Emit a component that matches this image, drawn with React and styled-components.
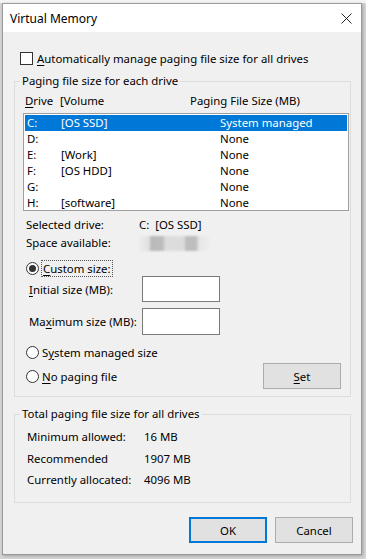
import React from 'react';
import styled, { createGlobalStyle } from 'styled-components';

const GlobalStyle = createGlobalStyle`
  html, body {
    margin: 0;
    padding: 0;
    background: #d5d5d5;
  }
  body {
    font-family: 'Noto Sans', 'Open Sans', sans-serif;
    font-size: 11.4px;
    color: #000;
  }
`;

const Screen = styled.div`
  width: 366px;
  height: 559px;
  overflow: hidden;
  background: #d5d5d5;
`;

const BackTabs = styled.div`
  height: 3px;
  overflow: hidden;
  background: #f4f4f4;
  display: flex;
  gap: 12px;
  padding-left: 7px;
  line-height: 16px;
  color: #333;

  span {
    margin-top: -13px;
    white-space: nowrap;
  }
`;

const Dialog = styled.div`
  margin-left: 2px;
  width: 358px;
  border: 1px solid #9a9a9a;
  background: #f0f0f0;
  box-shadow: 1px 1px 3px rgba(0, 0, 0, 0.25);
`;

const TitleBar = styled.div`
  height: 28px;
  background: #fff;
  display: flex;
  align-items: center;
  justify-content: space-between;
  padding: 0 9px 0 7px;
  font-size: 12px;
  color: #000;
`;

const Body = styled.div`
  padding: 18px 10px 11px 11px;
  display: flex;
  flex-direction: column;
`;

const CheckRow = styled.label`
  display: flex;
  align-items: center;
  height: 16px;
  padding-left: 6px;
  gap: 4px;
  white-space: nowrap;
`;

const CheckBox = styled.span`
  width: 11px;
  height: 11px;
  border: 1px solid #333;
  background: #fff;
  flex: none;
`;

const U = styled.span`
  text-decoration: underline;
  text-underline-offset: 2px;
`;

const GroupBox = styled.div`
  border: 1px solid #dcdcdc;
  margin-top: ${(p) => p.$top}px;
  padding: 0 1px ${(p) => p.$bottom}px 0;
  display: flex;
  flex-direction: column;
`;

const Legend = styled.div`
  margin: -9px 0 0 5px;
  padding: 0 2px;
  width: fit-content;
  line-height: 16px;
  background: #f0f0f0;
  white-space: nowrap;
`;

const HeaderRow = styled.div`
  display: grid;
  grid-template-columns: 35px 130px 1fr;
  margin-top: 4px;
  padding-left: 10px;
  height: 16px;
  line-height: 16px;
`;

const ListBox = styled.div`
  margin: 4px 0 0 8px;
  height: 96px;
  border: 1px solid #a0a0a0;
  background: #fff;
  padding: 0 1px;
`;

const ListRow = styled.div`
  display: grid;
  grid-template-columns: 34px 159px 1fr;
  height: 16px;
  line-height: 16px;
  padding-left: 2px;
  margin-top: ${(p) => (p.$first ? 1 : 0)}px;
  background: ${(p) => (p.$selected ? '#0078d7' : 'transparent')};
  color: ${(p) => (p.$selected ? '#fff' : '#000')};
  white-space: nowrap;
`;

const InfoRow = styled.div`
  display: grid;
  grid-template-columns: ${(p) => p.$label}px 1fr;
  align-items: center;
  height: 16px;
  line-height: 16px;
  margin-top: ${(p) => p.$top}px;
  padding-left: ${(p) => p.$left}px;
  white-space: nowrap;
`;

const Blurred = styled.div`
  width: 72px;
  height: 15px;
  background: linear-gradient(
    to right,
    #ececec 0,
    #e2e2e2 10px,
    #b9b9b9 12px,
    #bdbdbd 24px,
    #dcdcdc 26px,
    #dcdcdc 45px,
    #bdbdbd 47px,
    #bdbdbd 57px,
    #e6e6e6 60px,
    #efefef 72px
  );
  filter: blur(1px);
`;

const RadioRow = styled.label`
  display: flex;
  align-items: center;
  gap: 3px;
  height: ${(p) => p.$h || 16}px;
  margin-top: ${(p) => p.$top}px;
  padding-left: 11px;
  white-space: nowrap;
`;

const Radio = styled.span`
  width: 11px;
  height: 11px;
  border: 1px solid #333;
  border-radius: 50%;
  background: #fff;
  flex: none;
  display: flex;
  align-items: center;
  justify-content: center;

  &::after {
    content: '';
    width: 7px;
    height: 7px;
    border-radius: 50%;
    background: ${(p) => (p.$checked ? '#333' : 'transparent')};
  }
`;

const Focus = styled.span`
  outline: 1px dotted #555;
  outline-offset: 0;
  padding: 0 1px;
`;

const FieldRow = styled.div`
  display: grid;
  grid-template-columns: 113px 78px;
  align-items: center;
  margin-top: ${(p) => p.$top}px;
  padding-left: ${(p) => p.$left}px;
  white-space: nowrap;
`;

const TextBox = styled.input`
  box-sizing: border-box;
  width: 78px;
  height: ${(p) => p.$h}px;
  border: 1px solid #7a7a7a;
  background: #fff;
  margin: 0;
  padding: 0 3px;
  font: inherit;
`;

const SplitRow = styled.div`
  display: flex;
  align-items: center;
  justify-content: space-between;
  margin-top: 3px;
  padding-right: 8px;
`;

const Button = styled.button`
  box-sizing: border-box;
  width: 78px;
  height: ${(p) => p.$h || 26}px;
  background: #e1e1e1;
  border: ${(p) => (p.$default ? '2px solid #0078d7' : '1px solid #adadad')};
  font: inherit;
  color: #000;
  padding: 0;
`;

const Footer = styled.div`
  display: flex;
  justify-content: flex-end;
  gap: 8px;
  margin: 14px -2px 0 0;
`;

const Close = () => (
  <svg width="11" height="11" viewBox="0 0 11 11">
    <path d="M0.5 0.5 L10.5 10.5 M10.5 0.5 L0.5 10.5" stroke="#222" strokeWidth="1" />
  </svg>
);

const drives = [
  ['C:', '[OS SSD]', 'System managed'],
  ['D:', '', 'None'],
  ['E:', '[Work]', 'None'],
  ['F:', '[OS HDD]', 'None'],
  ['G:', '', 'None'],
  ['H:', '[software]', 'None'],
];

const App = () => (
  <Screen>
    <GlobalStyle />
    <BackTabs>
      <span>Visual Effects</span>
      <span>Advanced</span>
      <span>Data Execution Prevention</span>
    </BackTabs>
    <Dialog>
      <TitleBar>
        <span>Virtual Memory</span>
        <Close />
      </TitleBar>
      <Body>
        <CheckRow>
          <CheckBox />
          <span>
            <U>A</U>utomatically manage paging file size for all drives
          </span>
        </CheckRow>

        <GroupBox $top={15} $bottom={7}>
          <Legend>Paging file size for each drive</Legend>
          <HeaderRow>
            <span>
              <U>D</U>rive
            </span>
            <span>[Volume</span>
            <span>Paging File Size (MB)</span>
          </HeaderRow>
          <ListBox>
            {drives.map(([d, v, s], i) => (
              <ListRow key={d} $first={i === 0} $selected={i === 0}>
                <span>{d}</span>
                <span>{v}</span>
                <span>{s}</span>
              </ListRow>
            ))}
          </ListBox>
          <InfoRow $top={6} $left={11} $label={113}>
            <span>Selected drive:</span>
            <span>C:&nbsp; [OS SSD]</span>
          </InfoRow>
          <InfoRow $top={2} $left={11} $label={113}>
            <span>Space available:</span>
            <Blurred />
          </InfoRow>
          <RadioRow $top={10} $h={14}>
            <Radio $checked />
            <Focus>
              <U>C</U>ustom size:
            </Focus>
          </RadioRow>
          <FieldRow $top={1} $left={14}>
            <span>
              <U>I</U>nitial size (MB):
            </span>
            <TextBox $h={26} />
          </FieldRow>
          <FieldRow $top={6} $left={14}>
            <span>
              Ma<U>x</U>imum size (MB):
            </span>
            <TextBox $h={27} />
          </FieldRow>
          <RadioRow $top={9}>
            <Radio />
            <span>
              S<U>y</U>stem managed size
            </span>
          </RadioRow>
          <SplitRow>
            <RadioRow $top={0}>
              <Radio />
              <span>
                <U>N</U>o paging file
              </span>
            </RadioRow>
            <Button>
              <U>S</U>et
            </Button>
          </SplitRow>
        </GroupBox>

        <GroupBox $top={17} $bottom={14}>
          <Legend>Total paging file size for all drives</Legend>
          <InfoRow $top={7} $left={12} $label={117}>
            <span>Minimum allowed:</span>
            <span>16 MB</span>
          </InfoRow>
          <InfoRow $top={6} $left={12} $label={117}>
            <span>Recommended</span>
            <span>1907 MB</span>
          </InfoRow>
          <InfoRow $top={5} $left={12} $label={117}>
            <span>Currently allocated:</span>
            <span>4096 MB</span>
          </InfoRow>
        </GroupBox>

        <Footer>
          <Button $default>OK</Button>
          <Button>Cancel</Button>
        </Footer>
      </Body>
    </Dialog>
  </Screen>
);

export default App;
